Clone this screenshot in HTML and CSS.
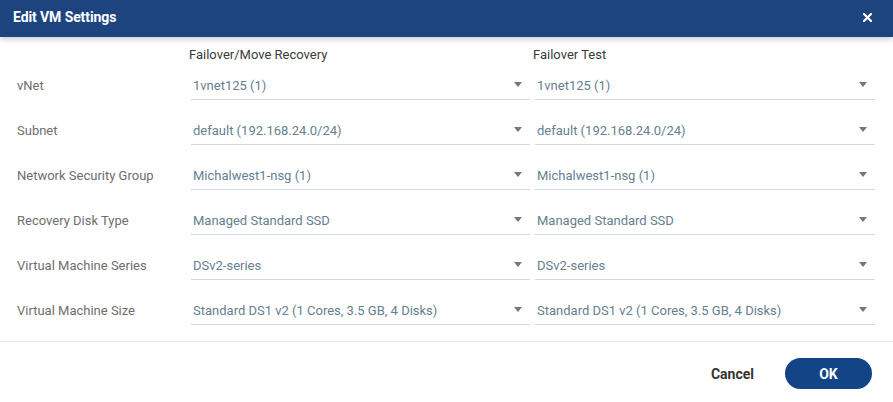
FILE: index.html
```html
<!DOCTYPE html>
<html>
<head>
<meta charset="utf-8">
<link rel="stylesheet" href="styles.css">
</head>
<body>
<div class="dialog">
  <div class="header">
    <span class="title">Edit VM Settings</span>
    <svg class="close" width="9" height="9" viewBox="0 0 9 9"><path d="M1 1L8 8M8 1L1 8" stroke="#fff" stroke-width="2.2" stroke-linecap="square"/></svg>
  </div>
  <div class="content">
    <div class="colheads">
      <div></div>
      <div class="colhead">Failover/Move Recovery</div>
      <div class="colhead">Failover Test</div>
    </div>
    <div class="rows">
      <div class="label">vNet</div>
      <div class="select"><span>1vnet125 (1)</span><i class="arrow"></i></div>
      <div class="select"><span>1vnet125 (1)</span><i class="arrow"></i></div>

      <div class="label">Subnet</div>
      <div class="select"><span>default (192.168.24.0/24)</span><i class="arrow"></i></div>
      <div class="select"><span>default (192.168.24.0/24)</span><i class="arrow"></i></div>

      <div class="label">Network Security Group</div>
      <div class="select"><span>Michalwest1-nsg (1)</span><i class="arrow"></i></div>
      <div class="select"><span>Michalwest1-nsg (1)</span><i class="arrow"></i></div>

      <div class="label">Recovery Disk Type</div>
      <div class="select"><span>Managed Standard SSD</span><i class="arrow"></i></div>
      <div class="select"><span>Managed Standard SSD</span><i class="arrow"></i></div>

      <div class="label">Virtual Machine Series</div>
      <div class="select"><span>DSv2-series</span><i class="arrow"></i></div>
      <div class="select"><span>DSv2-series</span><i class="arrow"></i></div>

      <div class="label">Virtual Machine Size</div>
      <div class="select"><span>Standard DS1 v2 (1 Cores, 3.5 GB, 4 Disks)</span><i class="arrow"></i></div>
      <div class="select"><span>Standard DS1 v2 (1 Cores, 3.5 GB, 4 Disks)</span><i class="arrow"></i></div>
    </div>
  </div>
  <div class="footer">
    <button class="cancel">Cancel</button>
    <button class="ok">OK</button>
  </div>
</div>
</body>
</html>
```
FILE: styles.css
```css
* { box-sizing: border-box; }
html, body { margin: 0; padding: 0; background: #fff; }
body { font-family: Roboto, "Liberation Sans", sans-serif; width: 893px; height: 402px; overflow: hidden; }
.dialog { display: flex; flex-direction: column; height: 402px; }
.header {
  height: 37px; background: #1e4480; color: #fff;
  display: flex; align-items: center; justify-content: space-between;
  padding: 0 21px 3px 13px;
  box-shadow: 0 2px 6px rgba(0,0,0,0.22);
  position: relative; z-index: 1;
}
.title { font-weight: 700; font-size: 14px; letter-spacing: -0.1px; }
.close { display: block; margin-top: 1px; }
.content { padding: 7px 18px 0 17px; height: 305px; border-bottom: 1px solid #e4eaf0; }
.colheads, .rows {
  display: grid;
  grid-template-columns: 169px 339px 340px;
  column-gap: 5px;
}
.colheads { height: 26px; align-items: center; }
.colhead { font-size: 13px; color: #3a3a3a; line-height: 18px; margin-left: -2px; padding-bottom: 4px; }
.rows { row-gap: 15px; }
.label { font-size: 13px; color: #6e6e6e; height: 30px; display: flex; align-items: center; }
.select {
  height: 30px; border-bottom: 1px solid #d3d9de;
  display: flex; align-items: center; justify-content: space-between;
  padding: 0 8px 0 2px;
  font-size: 13px; color: #66808f;
}
.select span { margin-top: 1px; }
.arrow {
  width: 0; height: 0;
  border-left: 4.5px solid transparent; border-right: 4.5px solid transparent;
  border-top: 5px solid #777;
  margin-top: -1px;
}
.footer {
  display: flex; justify-content: flex-end; align-items: flex-start;
  padding: 16px 21px 0 0; gap: 31px;
}
button { font-family: inherit; border: 0; cursor: pointer; }
.cancel { background: none; font-weight: 700; font-size: 14px; color: #333; padding: 0; height: 31px; }
.ok {
  background: #134486; color: #fff; font-weight: 700; font-size: 14px;
  width: 87px; height: 31px; border-radius: 16px;
}
```
